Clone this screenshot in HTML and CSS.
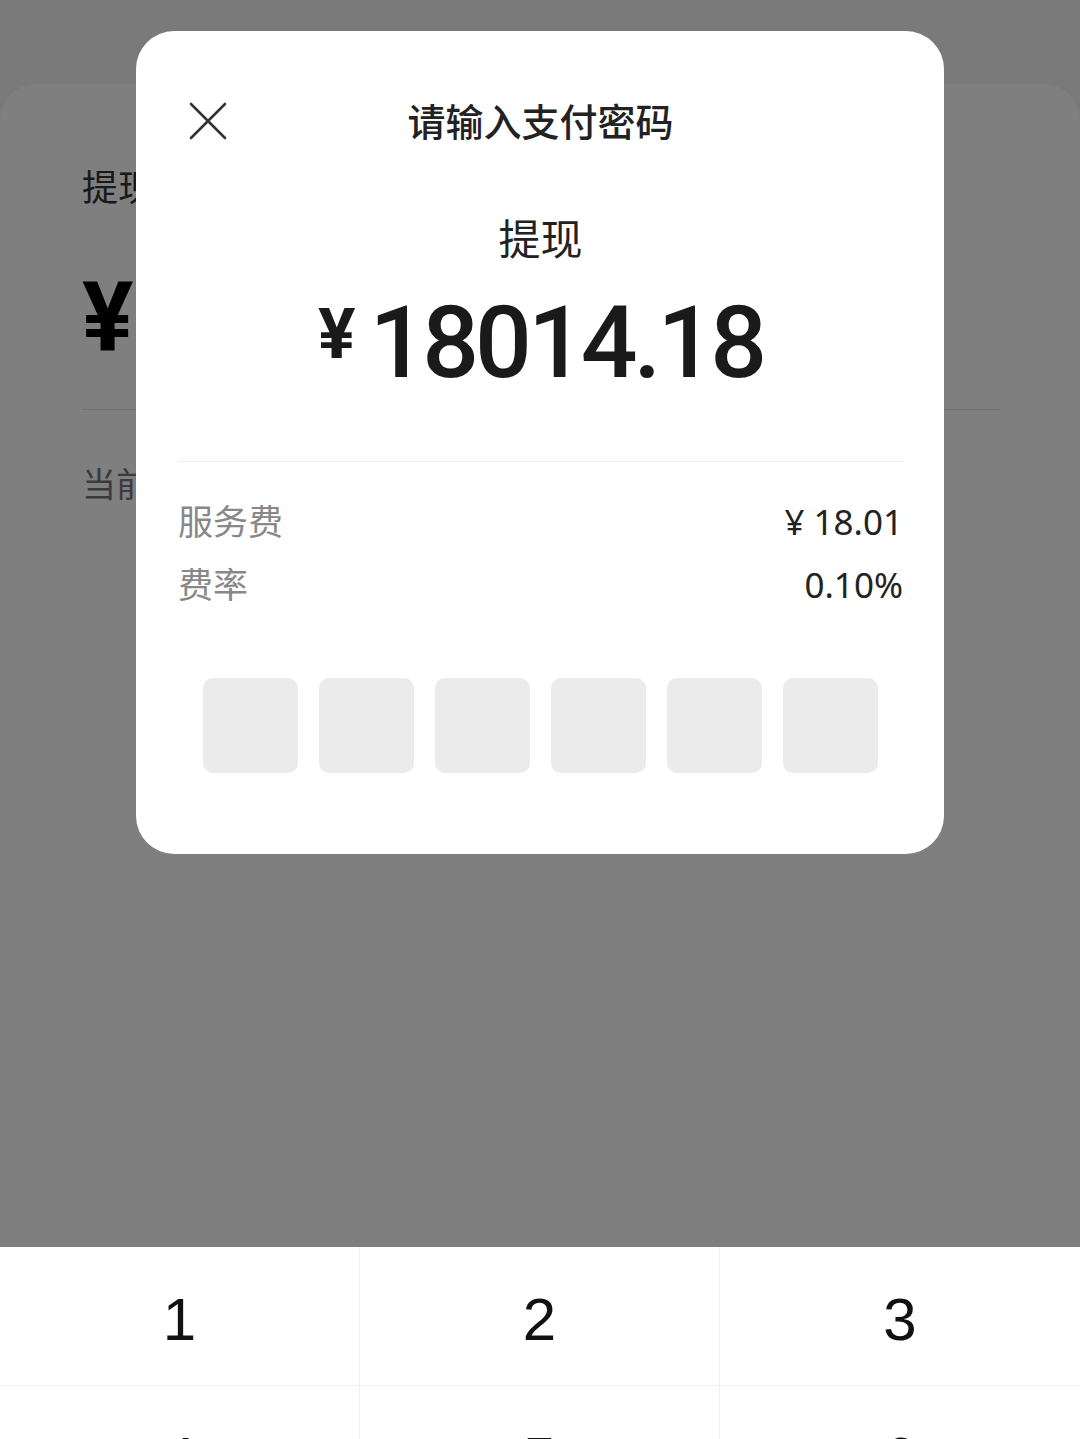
FILE: index.html
```html
<!DOCTYPE html>
<html lang="zh-CN">
<head>
    <meta charset="UTF-8">
    <title>提现 - 输入支付密码</title>
    <link rel="stylesheet" href="styles.css">
</head>
<body>
    <div class="page">
        <div class="page-label">提现</div>
        <div class="page-amount">
            <span class="page-yen">¥</span>
            <input class="page-input" type="text" readonly>
        </div>
        <div class="page-hint">当前</div>
    </div>

    <div class="mask"></div>

    <div class="dialog">
        <div class="dialog-header">
            <button class="close-btn">
                <svg width="38" height="38" viewBox="0 0 38 38">
                    <path d="M2 2 L36 36 M36 2 L2 36" stroke="#333" stroke-width="2.6" stroke-linecap="round" fill="none"/>
                </svg>
            </button>
            <div class="dialog-title">请输入支付密码</div>
            <div></div>
        </div>

        <div class="dialog-sub">提现</div>
        <div class="dialog-amount">
            <span class="yen">¥</span>
            <span class="digits">18014.18</span>
        </div>

        <div class="fee-list">
            <div class="fee-row">
                <span class="fee-label">服务费</span>
                <span class="fee-value">¥ 18.01</span>
            </div>
            <div class="fee-row">
                <span class="fee-label">费率</span>
                <span class="fee-value">0.10%</span>
            </div>
        </div>

        <div class="pwd-boxes">
            <div class="pwd-box"></div>
            <div class="pwd-box"></div>
            <div class="pwd-box"></div>
            <div class="pwd-box"></div>
            <div class="pwd-box"></div>
            <div class="pwd-box"></div>
        </div>
    </div>

    <div class="keyboard">
        <div class="key">1</div>
        <div class="key">2</div>
        <div class="key">3</div>
        <div class="key">4</div>
        <div class="key">5</div>
        <div class="key">6</div>
        <div class="key">7</div>
        <div class="key">8</div>
        <div class="key">9</div>
        <div class="key empty"></div>
        <div class="key">0</div>
        <div class="key empty"></div>
    </div>
</body>
</html>
```

FILE: styles.css
```css
body {
    margin: 0;
    background-color: #f4f4f4;
    font-family: "Noto Sans", "Noto Sans CJK SC", sans-serif;
    overflow: hidden;
    height: 1439px;
}
.page {
    margin-top: 84px;
    background-color: #fff;
    border-radius: 36px 36px 0 0;
    height: 1355px;
    padding: 79px 80px 0 82px;
    box-sizing: border-box;
}
.page-label {
    font-size: 36px;
    line-height: 50px;
    color: #333;
}
.page-amount {
    margin-top: 49px;
    display: flex;
    align-items: center;
    height: 110px;
    padding-bottom: 37px;
    border-bottom: 1px solid #e6e6e6;
}
.page-yen {
    font-family: Roboto, sans-serif;
    font-weight: 700;
    font-size: 96px;
    line-height: 110px;
    color: #000;
}
.page-input {
    flex: 1;
    height: 100px;
    border: none;
    outline: none;
    background: transparent;
}
.page-hint {
    margin-top: 49px;
    font-size: 34px;
    line-height: 50px;
    color: #777;
}
.mask {
    position: fixed;
    top: 0;
    left: 0;
    right: 0;
    bottom: 0;
    background-color: rgba(0,0,0,0.5);
}
.dialog {
    position: absolute;
    top: 31px;
    left: 50%;
    margin-left: -404px;
    width: 808px;
    box-sizing: border-box;
    padding: 0 41px 81px 42px;
    background-color: #fff;
    border-radius: 38px;
}
.dialog-header {
    margin-top: 52px;
    height: 72px;
    display: grid;
    grid-template-columns: 1fr auto 1fr;
    align-items: center;
}
.close-btn {
    justify-self: start;
    margin-left: 11px;
    margin-top: 4px;
    padding: 0;
    border: none;
    background: none;
    width: 38px;
    height: 38px;
    display: flex;
}
.dialog-title {
    font-size: 38px;
    font-weight: 500;
    color: #222;
}
.dialog-sub {
    margin-top: 59px;
    text-align: center;
    font-size: 42px;
    line-height: 50px;
    color: #222;
}
.dialog-amount {
    margin-top: 24px;
    display: flex;
    justify-content: center;
    align-items: flex-start;
    font-family: Roboto, sans-serif;
    color: #1a1a1a;
    padding-bottom: 63px;
    border-bottom: 1px solid #eeeeee;
}
.yen {
    font-size: 70px;
    font-weight: 700;
    line-height: 70px;
    margin-top: 11px;
    margin-right: 14px;
}
.digits {
    font-size: 100px;
    font-weight: 500;
    line-height: 110px;
    letter-spacing: -4px;
}
.fee-list {
    margin-top: 35px;
    display: flex;
    flex-direction: column;
    gap: 13px;
}
.fee-row {
    display: flex;
    justify-content: space-between;
    height: 50px;
    line-height: 50px;
    font-size: 35px;
}
.fee-label {
    color: #888;
}
.fee-value {
    color: #222;
}
.pwd-boxes {
    margin-top: 68px;
    display: flex;
    justify-content: center;
    gap: 21px;
}
.pwd-box {
    width: 95px;
    height: 95px;
    border-radius: 10px;
    background-color: #ebebeb;
}
.keyboard {
    position: fixed;
    top: 1247px;
    left: 0;
    right: 0;
    background-color: #fff;
    display: grid;
    grid-template-columns: 1fr 1fr 1fr;
}
.key {
    height: 139px;
    line-height: 139px;
    padding-top: 3px;
    box-sizing: border-box;
    text-align: center;
    font-family: "Liberation Sans", Arial, sans-serif;
    font-size: 60px;
    color: #111;
    border-bottom: 1px solid #f0f0f0;
    border-right: 1px solid #f0f0f0;
}
.key:nth-child(3n) {
    border-right: none;
}
```
